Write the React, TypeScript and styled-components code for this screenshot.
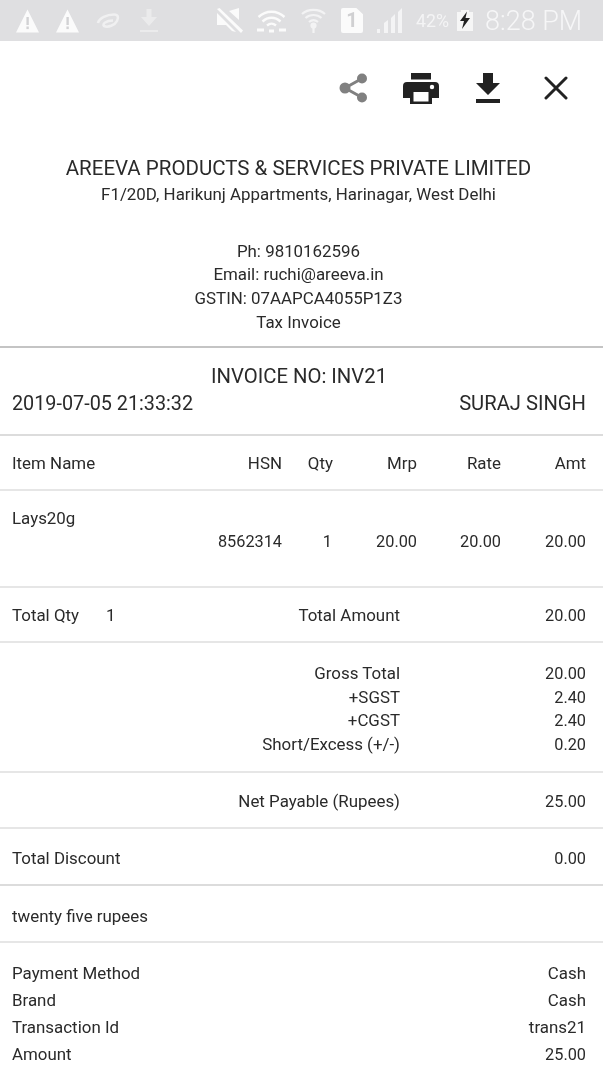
import React from 'react'
import styled, { createGlobalStyle } from 'styled-components'

const GlobalStyle = createGlobalStyle`
  html, body {
    margin: 0;
    padding: 0;
    background: #fff;
  }
  body {
    font-family: Roboto, "Liberation Sans", sans-serif;
    font-size: 16.9px;
    color: #2a2a2a;
  }
  * {
    box-sizing: border-box;
  }
`

const totals = [
  { label: 'Gross Total', value: '20.00' },
  { label: '+SGST', value: '2.40' },
  { label: '+CGST', value: '2.40' },
  { label: 'Short/Excess (+/-)', value: '0.20' },
]

const payments = [
  { label: 'Payment Method', value: 'Cash', numeric: false },
  { label: 'Brand', value: 'Cash', numeric: false },
  { label: 'Transaction Id', value: 'trans21', numeric: false },
  { label: 'Amount', value: '25.00', numeric: true },
]

const Warning = () => (
  <WarningIcon width="23" height="24" viewBox="0 0 23 24">
    <path d="M11.5 0.5 L23 23.5 H0 Z" fill="#fbfbfb" />
    <rect x="10.4" y="8" width="2.4" height="8" fill="#d2d2d4" />
    <rect x="10.4" y="17.5" width="2.4" height="2.6" fill="#d2d2d4" />
  </WarningIcon>
)

const StatusIcons = () => (
  <>
    <Warning />
    <StatusSlot $gap={17}>
      <Warning />
    </StatusSlot>
    <StatusSlot $gap={17}>
      <svg width="24" height="16" viewBox="0 0 24 16" fill="none" stroke="#f0f0f1" strokeWidth="2.6">
        <path d="M2 10 C3 5 11 1.5 18 1.5 C22 1.5 23 4 21 8 C19 12 12 15 8 13 C6 11 10 7.5 17 7.5" />
      </svg>
    </StatusSlot>
    <StatusSlot $gap={20}>
      <svg width="18" height="24" viewBox="0 0 18 24" fill="#ebebec">
        <path d="M6.5 0 H11.5 V8 H17 L9 17 L1 8 H6.5 Z" />
        <rect x="0" y="21" width="18" height="2" />
      </svg>
    </StatusSlot>
    <StatusSlot $gap={59}>
      <svg width="26" height="25" viewBox="0 0 26 25" fill="#fbfbfb">
        <path d="M0 1 L2.5 0 L26 22.5 L24 25 Z" />
        <path d="M22 0 V12 L12 3 Z" />
        <path d="M0 5 L19 24 L15 23 L9 17 H0 Z" />
      </svg>
    </StatusSlot>
    <StatusSlot $gap={14}>
      <svg width="29" height="24" viewBox="0 0 29 24" fill="none" stroke="#fbfbfb" strokeWidth="2.4">
        <path d="M1.5 8 C9 1 20 1 27.5 8" />
        <path d="M5.5 12.5 C11 7.5 18 7.5 23.5 12.5" />
        <path d="M10 16.5 C13 14 16 14 19 16.5" />
        <path d="M0 21 H7 M12 22 H17 M22 21 H29" strokeWidth="3.2" />
      </svg>
    </StatusSlot>
    <StatusSlot $gap={15}>
      <svg width="25" height="25" viewBox="0 0 25 25" fill="none" stroke="#f3f3f4" strokeWidth="2.2">
        <path d="M1 6 C7 0.5 18 0.5 24 6" />
        <path d="M4.5 10 C9 6 16 6 20.5 10" />
        <path d="M8 14 C11 11.5 14 11.5 17 14" />
        <circle cx="12.5" cy="17.5" r="2" fill="#f3f3f4" />
        <path d="M12.5 19 V25" />
      </svg>
    </StatusSlot>
    <StatusSlot $gap={15}>
      <SimCard>1</SimCard>
    </StatusSlot>
    <StatusSlot $gap={14}>
      <svg width="26" height="25" viewBox="0 0 26 25" fill="#f4f4f5">
        <rect x="0" y="21" width="3" height="4" />
        <path d="M7 25 V15 L11 12 V25 Z" />
        <path d="M14 25 V10 L18 6 V25 Z" />
        <path d="M21 25 V4 L25 0 V25 Z" />
      </svg>
    </StatusSlot>
    <StatusSlot $gap={13}>
      <Percent>42%</Percent>
    </StatusSlot>
    <StatusSlot $gap={8}>
      <svg width="16" height="21" viewBox="0 0 16 21">
        <path d="M0 2 H4 V0 H12 V2 H16 V21 H0 Z" fill="#f6f6f6" />
        <path d="M10 1.5 L3 11 H7 L5 19 L13 8 H8.5 Z" fill="#222" />
      </svg>
    </StatusSlot>
    <StatusSlot $gap={12}>
      <Clock>8:28 PM</Clock>
    </StatusSlot>
  </>
)

export default function App() {
  return (
    <>
      <GlobalStyle />
      <Page>
        <StatusBar>
          <StatusIcons />
        </StatusBar>

        <Toolbar>
          <svg width="29" height="30" viewBox="0 0 29 30" fill="#808080">
            <circle cx="23" cy="5.5" r="5" />
            <circle cx="23" cy="24.5" r="5" />
            <circle cx="6" cy="15" r="5.5" />
            <path d="M6 15 L23 5.5 M6 15 L23 24.5" stroke="#808080" strokeWidth="3" />
          </svg>
          <ToolSlot $gap={35}>
            <svg width="36" height="31" viewBox="0 0 36 31">
              <rect x="8" y="0" width="20" height="6.5" fill="#222" />
              <path d="M4 9 H32 A4 4 0 0 1 36 13 V25 H29 V31 H7 V25 H0 V13 A4 4 0 0 1 4 9 Z" fill="#222" />
              <rect x="10.5" y="19" width="15" height="9.5" fill="#fff" />
              <circle cx="29" cy="14" r="2.2" fill="#fff" />
            </svg>
          </ToolSlot>
          <ToolSlot $gap={37}>
            <svg width="24" height="30" viewBox="0 0 24 30" fill="#222">
              <path d="M7 0 H17 V10 H24 L12 22 L0 10 H7 Z" />
              <rect x="0" y="26" width="24" height="4" />
            </svg>
          </ToolSlot>
          <ToolSlot $gap={44}>
            <svg width="24" height="24" viewBox="0 0 24 24" fill="none" stroke="#222" strokeWidth="3" strokeLinecap="round">
              <path d="M2 2 L22 22 M22 2 L2 22" />
            </svg>
          </ToolSlot>
        </Toolbar>

        <Company>
          <CompanyName>AREEVA PRODUCTS &amp; SERVICES PRIVATE LIMITED</CompanyName>
          <CompanyLine>F1/20D, Harikunj Appartments, Harinagar, West Delhi</CompanyLine>
          <ContactBlock>
            <CompanyLine>Ph: 9810162596</CompanyLine>
            <CompanyLine>Email: ruchi@areeva.in</CompanyLine>
            <CompanyLine>GSTIN: 07AAPCA4055P1Z3</CompanyLine>
            <CompanyLine>Tax Invoice</CompanyLine>
          </ContactBlock>
        </Company>

        <Section $height={88} $strong>
          <InvoiceNo>INVOICE NO: INV21</InvoiceNo>
          <SplitRow $large>
            <DateText>2019-07-05 21:33:32</DateText>
            <span>SURAJ SINGH</span>
          </SplitRow>
        </Section>

        <Section $height={55}>
          <ItemGrid>
            <span>Item Name</span>
            <Cell>HSN</Cell>
            <Cell>Qty</Cell>
            <Cell>Mrp</Cell>
            <Cell>Rate</Cell>
            <Cell>Amt</Cell>
          </ItemGrid>
        </Section>

        <ItemSection>
          <div>Lays20g</div>
          <ItemGrid>
            <span />
            <Cell $numeric>8562314</Cell>
            <Cell $numeric $inset={1}>1</Cell>
            <Cell $numeric>20.00</Cell>
            <Cell $numeric>20.00</Cell>
            <Cell $numeric>20.00</Cell>
          </ItemGrid>
        </ItemSection>

        <Section $height={55} $shift={2}>
          <TotalGrid>
            <TotalQty>
              <span>Total Qty</span>
              <span>1</span>
            </TotalQty>
            <Cell>Total Amount</Cell>
            <Cell $numeric>20.00</Cell>
          </TotalGrid>
        </Section>

        <TotalsSection>
          {totals.map(({ label, value }) => (
            <TotalGrid key={label}>
              <span />
              <Cell>{label}</Cell>
              <Cell $numeric>{value}</Cell>
            </TotalGrid>
          ))}
        </TotalsSection>

        <Section $height={56} $shift={3}>
          <TotalGrid>
            <span />
            <Cell>Net Payable (Rupees)</Cell>
            <Cell $numeric>25.00</Cell>
          </TotalGrid>
        </Section>

        <Section $height={57} $strong $shift={4}>
          <SplitRow>
            <span>Total Discount</span>
            <Cell $numeric>0.00</Cell>
          </SplitRow>
        </Section>

        <Section $height={57} $shift={5}>
          <SplitRow>
            <span>twenty five rupees</span>
          </SplitRow>
        </Section>

        <PaymentSection>
          {payments.map(({ label, value, numeric }) => (
            <SplitRow key={label}>
              <span>{label}</span>
              <Cell $numeric={numeric}>{value}</Cell>
            </SplitRow>
          ))}
        </PaymentSection>
      </Page>
    </>
  )
}

const Page = styled.div`
  width: 603px;
  height: 1080px;
  overflow: hidden;
  background: #fff;
  filter: blur(0.35px);
`

const StatusBar = styled.div`
  display: flex;
  align-items: center;
  height: 41px;
  padding: 0 0 0 16px;
  background: #dfdfe1;
`

const WarningIcon = styled.svg`
  display: block;
`

const StatusSlot = styled.div<{ $gap: number }>`
  display: flex;
  align-items: center;
  margin-left: ${({ $gap }) => $gap}px;
`

const SimCard = styled.div`
  width: 22px;
  height: 25px;
  clip-path: polygon(0 0, 70% 0, 100% 25%, 100% 100%, 0 100%);
  border-radius: 2px;
  background: #fbfbfb;
  color: #d0d0d2;
  font-size: 20px;
  font-weight: 700;
  line-height: 25px;
  text-align: center;
`

const Percent = styled.span`
  color: #f4f4f5;
  font-size: 17.8px;
`

const Clock = styled.span`
  color: #f6f6f7;
  font-size: 27px;
  font-weight: 300;
`

const Toolbar = styled.div`
  display: flex;
  align-items: center;
  height: 94px;
  padding: 0 0 0 339px;
`

const ToolSlot = styled.div<{ $gap: number }>`
  display: flex;
  margin-left: ${({ $gap }) => $gap}px;
`

const Company = styled.div`
  display: flex;
  flex-direction: column;
  align-items: center;
  height: 213px;
  padding: 20px 6px 0 0;
  border-bottom: 2px solid #c4c4c4;
`

const CompanyName = styled.div`
  margin-bottom: 2px;
  font-size: 20.5px;
  line-height: 26px;
`

const CompanyLine = styled.div`
  line-height: 23.7px;
  text-align: center;
`

const ContactBlock = styled.div`
  margin-top: 33px;
`

const Section = styled.div<{ $height: number; $strong?: boolean; $shift?: number }>`
  display: flex;
  flex-direction: column;
  justify-content: center;
  height: ${({ $height }) => $height}px;
  padding: ${({ $shift = 0 }) => $shift}px 17px 0 12px;
  border-bottom: ${({ $strong }) => ($strong ? '2px solid #dcdcdc' : '2px solid #e6e6e6')};
`

const InvoiceNo = styled.div`
  font-size: 20.3px;
  line-height: 28px;
  text-align: center;
`

const SplitRow = styled.div<{ $large?: boolean }>`
  display: flex;
  justify-content: space-between;
  margin-bottom: ${({ $large }) => ($large ? '3px' : '0')};
  font-size: ${({ $large }) => ($large ? '20.2px' : 'inherit')};
  line-height: 27px;
`

const DateText = styled.span`
  font-size: 19.8px;
`

const ItemGrid = styled.div`
  display: grid;
  grid-template-columns: 1fr 80px 51px 84px 84px 85px;
  line-height: 24px;
`

const Cell = styled.span<{ $inset?: number; $numeric?: boolean }>`
  padding-right: ${({ $inset = 0 }) => $inset}px;
  font-size: ${({ $numeric }) => ($numeric ? '16.3px' : 'inherit')};
  text-align: right;
  white-space: nowrap;
`

const ItemSection = styled.div`
  height: 97px;
  padding: 15px 17px 0 12px;
  line-height: 24px;
  border-bottom: 2px solid #e6e6e6;
`

const TotalGrid = styled.div`
  display: grid;
  grid-template-columns: 1fr 200px 186px;
  line-height: 23.7px;
`

const TotalQty = styled.div`
  display: flex;
  gap: 27px;
`

const TotalsSection = styled.div`
  height: 130px;
  padding: 19px 17px 0 12px;
  border-bottom: 2px solid #e6e6e6;
`

const PaymentSection = styled.div`
  padding: 17px 17px 0 12px;
`
